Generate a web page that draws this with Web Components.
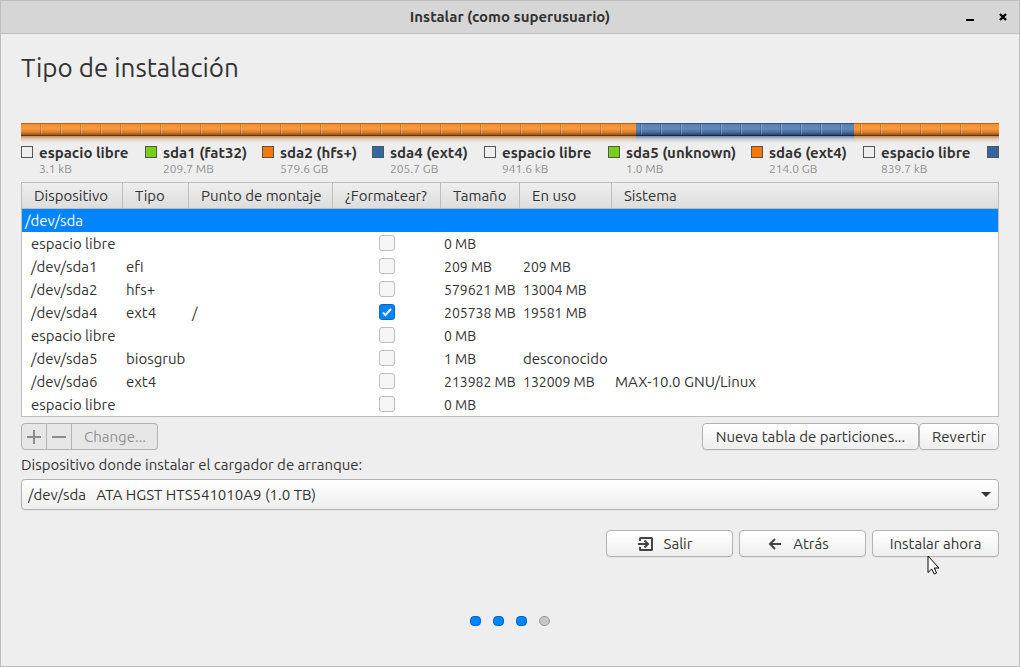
<!DOCTYPE html>
<html lang="es">
<head>
<meta charset="utf-8">
<title>Instalar (como superusuario)</title>
<style>
  body { margin: 0; font: 15px/20px Ubuntu, "Noto Sans", sans-serif; color: #333; background: #eee; }
</style>
</head>
<body>
<installer-window heading="Instalar (como superusuario)">
  <page-title>Tipo de instalación</page-title>
  <disk-usage></disk-usage>
  <partition-table></partition-table>
  <partition-tools></partition-tools>
  <boot-device></boot-device>
  <wizard-nav></wizard-nav>
  <step-dots total="4" done="3"></step-dots>
</installer-window>

<script>
const define = (name, html, setup) => {
  customElements.define(name, class extends HTMLElement {
    constructor() {
      super();
      const root = this.attachShadow({ mode: 'open' });
      const t = document.createElement('template');
      t.innerHTML = '<style>*{box-sizing:border-box}</style>' + html;
      root.append(t.content.cloneNode(true));
    }
    connectedCallback() { if (setup) setup(this, this.shadowRoot); }
  });
};

define('installer-window', `
<style>
  :host { display: flex; flex-direction: column; min-height: 100vh; box-sizing: border-box; border: 1px solid #bdbdbd; background: #eee; }
  header { display: grid; grid-template-columns: 1fr auto 1fr; align-items: center; height: 33px; padding: 0 8px; background: #d6d6d6; border-bottom: 1px solid #bdbdbd; }
  h1 { grid-column: 2; margin: 0; font-size: 15px; line-height: 20px; font-weight: 600; }
  .controls { display: flex; justify-content: flex-end; gap: 17px; }
  .controls button { width: 16px; height: 16px; padding: 0; border: 0; background: none; }
  svg { display: block; }
  main { display: flex; flex-direction: column; padding: 16px 20px 0; }
</style>
<header>
  <h1></h1>
  <div class="controls">
    <button aria-label="Minimizar"><svg width="16" height="16"><path d="M4 10h8v2H4z"/></svg></button>
    <button aria-label="Cerrar"><svg width="16" height="16"><path d="M5 5l6 6M11 5l-6 6" stroke="#000" stroke-width="2.4"/></svg></button>
  </div>
</header>
<main><slot></slot></main>`,
(el, root) => { root.querySelector('h1').textContent = el.getAttribute('heading'); });

define('page-title', `
<style>
  :host { display: block; margin-bottom: 37px; }
  h2 { margin: 0; font-size: 26px; line-height: 36px; font-weight: 400; }
</style>
<h2><slot></slot></h2>`);

define('disk-usage', `
<style>
  :host { display: block; margin-bottom: 6px; }
  .bar { display: flex; height: 20px; margin-bottom: 1px; position: relative; }
  .bar i { display: grid; grid-template-rows: 13px 7px; min-width: 0; }
  .bar i::before, .bar i::after { content: ""; }
  .o::before { background: linear-gradient(#b46414 1px, #f68e28 1px, #f99a40 45%, #c87a2c 75%, #9c5208 12px, #6c3200 12px); }
  .o::after { background: linear-gradient(#bc8c60, #e0cebd 45%, #eee); }
  .b::before { background: linear-gradient(#315684 1px, #557fb8 1px, #6389be 45%, #456694 75%, #26456f 12px, #122848 12px); }
  .b::after { background: linear-gradient(#7587a0, #c7ced8 45%, #eee); }
  .bar::after { content: ""; position: absolute; inset: 1px 0 8px; background: repeating-linear-gradient(90deg, transparent 0 19px, #0000002a 19px 20px); }
  .bar::before { content: ""; position: absolute; inset: 1px 0 8px 1px; background: repeating-linear-gradient(90deg, transparent 0 19px, #ffffff38 19px 20px); }
  ul { display: grid; grid-template-columns: 124px 117px 110px 112px 124px 143px 112px 124px 12px; margin: 0; padding: 0; list-style: none; }
  li { display: grid; grid-template-columns: 12px auto; column-gap: 6px; align-content: start; justify-content: start; white-space: nowrap; min-height: 32px; }
  li > i { width: 12px; height: 12px; margin-top: 2px; border: 1px solid #555; }
  b { font-size: 15px; line-height: 18px; font-weight: 700; }
  small { grid-column: 2; font-size: 12px; line-height: 14px; color: #909090; }
</style>
<div class="bar" role="img" aria-label="Uso del disco"><i class="o" style="flex:615"></i><i class="b" style="flex:218"></i><i class="o" style="flex:145"></i></div>
<ul></ul>`,
(el, root) => {
  const free = 'transparent', green = '#73d216', orange = '#f57900', blue = '#3465a4';
  root.querySelector('ul').innerHTML = [
    [free, 'espacio libre', '3.1 kB'], [green, 'sda1 (fat32)', '209.7 MB'], [orange, 'sda2 (hfs+)', '579.6 GB'],
    [blue, 'sda4 (ext4)', '205.7 GB'], [free, 'espacio libre', '941.6 kB'], [green, 'sda5 (unknown)', '1.0 MB'],
    [orange, 'sda6 (ext4)', '214.0 GB'], [free, 'espacio libre', '839.7 kB'], [blue, '', '']
  ].map(([c, n, s]) => `<li><i style="background:${c}"></i>${n && `<b>${n}</b><small>${s}</small>`}</li>`).join('');
});

define('partition-table', `
<style>
  :host { display: block; border: 1px solid #bdbdbd; background: #fff; margin-bottom: 6px; }
  table { width: 100%; border-collapse: separate; border-spacing: 0; table-layout: fixed; }
  th { height: 26px; padding: 0 0 0 12px; text-align: left; font-weight: 400; white-space: nowrap; background: linear-gradient(#eee, #ddd); border-bottom: 1px solid #bdbdbd; border-right: 1px solid #bdbdbd; }
  th:last-child { border-right: 0; }
  td { height: 23px; padding: 0 0 0 3px; line-height: 20px; white-space: nowrap; }
  td:first-child { padding-left: 9px; }
  td.size { font-size: 14px; }
  td.check { padding: 0 0 1px; }
  tr.selected td { background: #0085ff; color: #fff; padding-left: 3px; }
  input { appearance: none; display: block; width: 16px; height: 16px; margin: 0 auto; border: 1px solid #bdbdbd; border-radius: 3px; background: #f6f6f6; }
  input:checked { border-color: #0066c5; background: #0085ff url("data:image/svg+xml,%3Csvg xmlns='http://www.w3.org/2000/svg' width='14' height='14'%3E%3Cpath d='M3 7.5L5.5 10L11 4' fill='none' stroke='white' stroke-width='2'/%3E%3C/svg%3E") center; }
</style>
<table>
  <colgroup><col style="width:101px"><col style="width:66px"><col style="width:144px"><col style="width:108px"><col style="width:79px"><col style="width:92px"><col></colgroup>
  <thead><tr><th>Dispositivo</th><th>Tipo</th><th>Punto de montaje</th><th>¿Formatear?</th><th>Tamaño</th><th>En uso</th><th>Sistema</th></tr></thead>
  <tbody><tr class="selected"><td colspan="7">/dev/sda</td></tr></tbody>
</table>`,
(el, root) => {
  root.querySelector('tbody').insertAdjacentHTML('beforeend', [
    ['espacio libre', '', '', 0, '0 MB', '', ''],
    ['/dev/sda1', 'efi', '', 0, '209 MB', '209 MB', ''],
    ['/dev/sda2', 'hfs+', '', 0, '579621 MB', '13004 MB', ''],
    ['/dev/sda4', 'ext4', '/', 1, '205738 MB', '19581 MB', ''],
    ['espacio libre', '', '', 0, '0 MB', '', ''],
    ['/dev/sda5', 'biosgrub', '', 0, '1 MB', 'desconocido', ''],
    ['/dev/sda6', 'ext4', '', 0, '213982 MB', '132009 MB', 'MAX-10.0 GNU/Linux'],
    ['espacio libre', '', '', 0, '0 MB', '', '']
  ].map(r => '<tr>' + r.map((c, i) => i === 3
    ? `<td class="check"><input type="checkbox" aria-label="Formatear ${r[0]}"${c ? ' checked' : ''}></td>`
    : `<td${/^\d+ MB$/.test(c) ? ' class="size"' : ''}>${c}</td>`).join('') + '</tr>').join(''));
});

const buttonStyle = `
  button { font: inherit; color: inherit; height: 27px; padding: 0 12px; border: 1px solid #b2b2b2; border-radius: 4px; background: linear-gradient(#fff, #eee); box-shadow: 0 1px 1px #0000000d; white-space: nowrap; }
  svg { display: block; }`;

define('partition-tools', `
<style>
  ${buttonStyle}
  :host { display: flex; justify-content: space-between; margin-bottom: 5px; }
  div { display: flex; }
  .edit button { color: #929292; background: #e6e6e6; border-radius: 0; box-shadow: none; }
  .edit button + button { border-left: 0; }
  .edit button:first-child { border-radius: 4px 0 0 4px; width: 26px; padding: 0 5px; }
  .edit button:nth-child(2) { width: 25px; padding: 0 5px; }
  .edit button:last-child { border-radius: 0 4px 4px 0; width: 86px; }
  .new { width: 217px; }
  .revert { width: 80px; }
</style>
<div class="edit">
  <button disabled aria-label="Añadir"><svg width="14" height="14"><path d="M0 6h6V0h2v6h6v2H8v6H6V8H0z" fill="#8c8c8c"/></svg></button><button disabled aria-label="Quitar"><svg width="14" height="14"><path d="M0 6h14v2H0z" fill="#8c8c8c"/></svg></button><button disabled>Change...</button>
</div>
<div><button class="new">Nueva tabla de particiones...</button><button class="revert">Revertir</button></div>`);

define('boot-device', `
<style>
  :host { display: grid; margin-bottom: 20px; }
  label { margin-bottom: 4px; }
  select { appearance: none; font: inherit; color: inherit; width: 100%; height: 31px; padding: 0 24px 0 6px; border: 1px solid #b2b2b2; border-radius: 4px; box-shadow: 0 1px 1px #0000000d;
    background: url("data:image/svg+xml,%3Csvg xmlns='http://www.w3.org/2000/svg' width='10' height='5'%3E%3Cpath d='M0 0h10L5 5z' fill='%23333'/%3E%3C/svg%3E") right 7px center no-repeat, linear-gradient(#fff, #eee); }
</style>
<label for="device">Dispositivo donde instalar el cargador de arranque:</label>
<select id="device"><option>/dev/sda&nbsp;&nbsp; ATA HGST HTS541010A9 (1.0 TB)</option></select>`);

define('wizard-nav', `
<style>
  ${buttonStyle}
  :host { display: flex; justify-content: flex-end; gap: 6px; margin-bottom: 59px; }
  button { display: flex; align-items: center; justify-content: center; gap: 10px; width: 127px; position: relative; }
  .with-icon { padding-right: 21px; }
  .cursor { position: absolute; left: 54px; top: 24px; }
</style>
<button class="with-icon"><svg width="16" height="16" fill="none" stroke="#444" stroke-width="2"><path d="M2 5V2.500Q2 2 2.500 2H13.500Q14 2 14 2.500V13.500Q14 14 13.500 14H2.500Q2 14 2 13.500V11M0 8H9M6.500 4.500L10 8L6.500 11.500"/></svg>Salir</button>
<button class="with-icon"><svg width="16" height="16" fill="none" stroke="#444" stroke-width="2"><path d="M14 8H3M8 3L3 8L8 13"/></svg>Atrás</button>
<button>Instalar ahora<svg class="cursor" width="13" height="20" aria-hidden="true"><path d="M1 1V17.500L4.700 14L7.200 19L9.600 18L7.300 13H12z" fill="#fff" stroke="#000"/></svg></button>`);

define('step-dots', `
<style>
  :host { display: flex; justify-content: center; gap: 12px; }
  i { width: 11px; height: 10px; border: 1px solid #999; border-radius: 5px; background: #c6c6c6; }
  i.done { background: #0085ff; border-color: #0066c5; border-radius: 4px; }
</style>`,
(el, root) => {
  for (let n = 0; n < +el.getAttribute('total'); n++) {
    const dot = document.createElement('i');
    if (n < +el.getAttribute('done')) dot.className = 'done';
    root.append(dot);
  }
});
</script>
</body>
</html>
